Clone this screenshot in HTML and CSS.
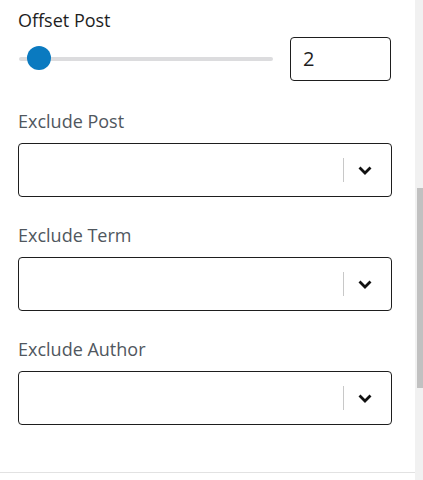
FILE: index.html
```html
<!DOCTYPE html>
<html lang="en">
<head>
<meta charset="utf-8">
<title>Query settings</title>
<link rel="stylesheet" href="styles.css">
</head>
<body>
<div class="layout">
  <main class="content">
    <div class="panel">
      <div class="field">
        <div class="label label-dark">Offset Post</div>
        <div class="range-row">
          <div class="range">
            <div class="track"></div>
            <div class="thumb"></div>
          </div>
          <div class="number">2</div>
        </div>
      </div>
      <div class="field field-select first">
        <div class="label">Exclude Post</div>
        <div class="select">
          <span class="sep"></span>
          <svg class="chev" width="14" height="9" viewBox="0 0 14 9"><polyline points="1.5,1.5 7,7 12.5,1.5" fill="none" stroke="#111" stroke-width="2.8"/></svg>
        </div>
      </div>
      <div class="field field-select">
        <div class="label">Exclude Term</div>
        <div class="select">
          <span class="sep"></span>
          <svg class="chev" width="14" height="9" viewBox="0 0 14 9"><polyline points="1.5,1.5 7,7 12.5,1.5" fill="none" stroke="#111" stroke-width="2.8"/></svg>
        </div>
      </div>
      <div class="field field-select">
        <div class="label">Exclude Author</div>
        <div class="select">
          <span class="sep"></span>
          <svg class="chev" width="14" height="9" viewBox="0 0 14 9"><polyline points="1.5,1.5 7,7 12.5,1.5" fill="none" stroke="#111" stroke-width="2.8"/></svg>
        </div>
      </div>
    </div>
  </main>
  <div class="scrollbar"><div class="scroll-thumb"></div></div>
</div>
</body>
</html>
```
FILE: styles.css
```css
* { box-sizing: border-box; }
html, body { margin: 0; padding: 0; background: #fff; }
body {
  font-family: "Open Sans", "Noto Sans", sans-serif;
  width: 423px;
  height: 480px;
  overflow: hidden;
}
.layout {
  display: flex;
  height: 480px;
}
.content {
  flex: 1;
}
.panel {
  height: 473px;
  border-bottom: 1px solid #e2e2e2;
  padding: 8px 0 0 18px;
}
.label {
  font-size: 18px;
  line-height: 24px;
  color: #50575e;
}
.label-dark { color: #1e1e1e; }
.range-row {
  margin-top: 5px;
  display: flex;
  align-items: center;
  height: 44px;
  gap: 16px;
}
.range {
  position: relative;
  flex: 0 0 256px;
  height: 24px;
  display: flex;
  align-items: center;
}
.track {
  flex: 1;
  margin: 0 1px;
  height: 4px;
  border-radius: 2px;
  background: #dcdcde;
}
.thumb {
  position: absolute;
  left: 9px;
  top: -1px;
  width: 24px;
  height: 24px;
  border-radius: 50%;
  background: #0a7ac0;
}
.number {
  width: 101px;
  height: 44px;
  border: 1px solid #1e1e1e;
  border-radius: 4px;
  padding-left: 12px;
  font-size: 20px;
  line-height: 42px;
  color: #1e1e1e;
}
.field-select { margin-top: 26px; }
.field-select.first { margin-top: 28px; }
.select {
  margin-top: 10px;
  width: 374px;
  height: 54px;
  border: 1px solid #1e1e1e;
  border-radius: 4px;
  display: flex;
  align-items: center;
  justify-content: flex-end;
  padding-right: 19px;
}
.sep {
  width: 1px;
  height: 24px;
  background: #c8c8c8;
}
.chev {
  margin-left: 14px;
  display: block;
}
.scrollbar {
  flex: 0 0 8px;
  background: #f1f1f1;
  padding-top: 188px;
  padding-left: 2px;
}
.scroll-thumb {
  width: 6px;
  height: 200px;
  background: #c1c1c1;
}
```
